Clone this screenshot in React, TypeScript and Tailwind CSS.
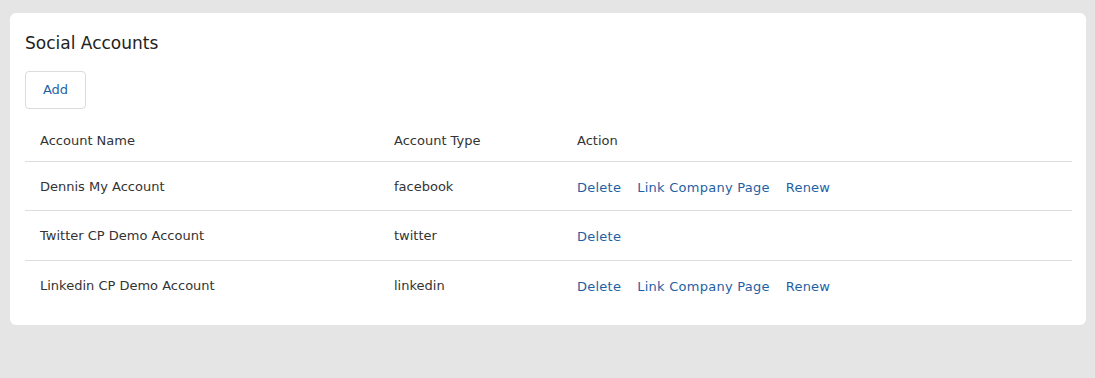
import React from 'react';

interface Account {
  name: string;
  type: string;
  full: boolean;
}

const accounts: Account[] = [
  { name: 'Dennis My Account', type: 'facebook', full: true },
  { name: 'Twitter CP Demo Account', type: 'twitter', full: false },
  { name: 'Linkedin CP Demo Account', type: 'linkedin', full: true },
];

export default function App() {
  return (
    <div
      className="min-h-[378px] bg-[#e5e5e5] pl-[10px] pr-[9px] pt-[13px] text-[#333]"
      style={{ fontFamily: '"DejaVu Sans", sans-serif' }}
    >
      <div className="rounded-[6px] bg-white pl-[15px] pr-[14px] pt-[20px] pb-[16px]">
        <h2 className="text-[17px] leading-[20px] text-[#222]">Social Accounts</h2>
        <button className="mt-[18px] h-[38px] w-[61px] rounded-[4px] border border-[#dcdcdc] text-[13px] text-[#1f63a6]">
          Add
        </button>
        <table className="mt-[11px] w-full border-collapse text-[13px]">
          <thead>
            <tr className="border-b border-[#dedede]">
              <th className="h-[41px] w-[354px] px-[15px] pt-[1px] text-left font-normal">Account Name</th>
              <th className="w-[183px] px-[15px] pt-[1px] text-left font-normal">Account Type</th>
              <th className="px-[15px] pt-[1px] text-left font-normal">Action</th>
            </tr>
          </thead>
          <tbody>
            {accounts.map((a, i) => (
              <tr key={a.name} className={i < accounts.length - 1 ? 'border-b border-[#dedede]' : ''}>
                <td className={`${i === 1 ? 'h-[50px]' : 'h-[49px]'} px-[15px] pt-[2px]`}>{a.name}</td>
                <td className="px-[15px] pt-[2px]">{a.type}</td>
                <td className="px-[15px] pt-[4px] tracking-[0.25px] text-[#1f5fa3]">
                  <div className="flex gap-[16px]">
                    <a>Delete</a>
                    {a.full && <a>Link Company Page</a>}
                    {a.full && <a>Renew</a>}
                  </div>
                </td>
              </tr>
            ))}
          </tbody>
        </table>
      </div>
    </div>
  );
}
